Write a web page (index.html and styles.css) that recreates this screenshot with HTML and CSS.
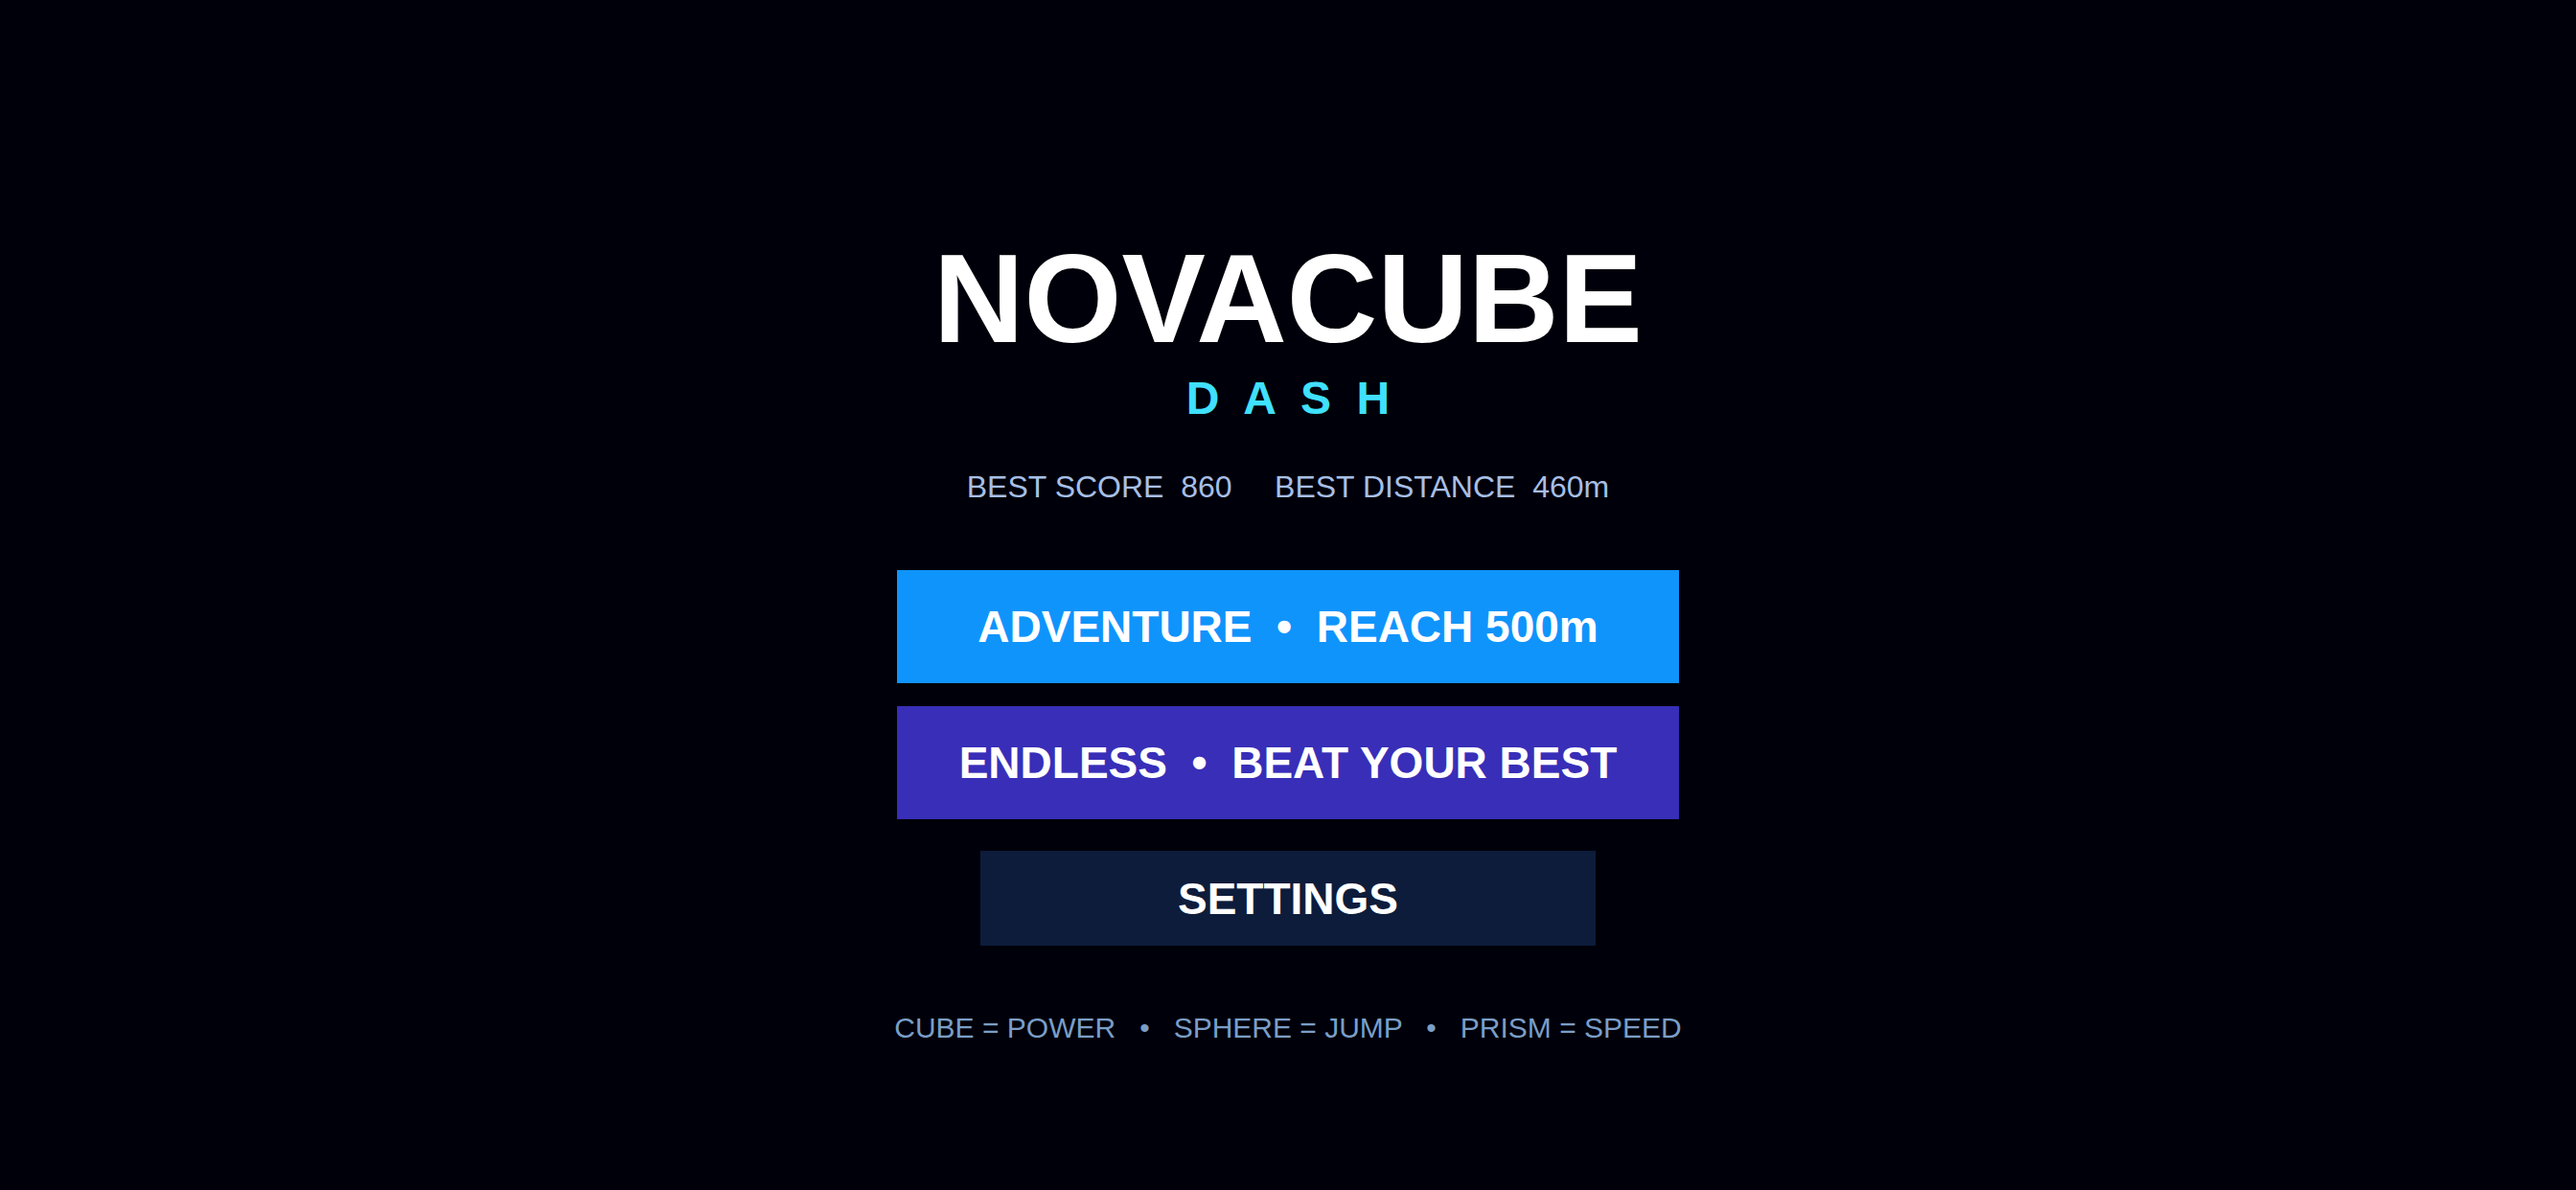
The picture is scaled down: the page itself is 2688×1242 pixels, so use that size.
FILE: index.html
```html
<!DOCTYPE html>
<html lang="en">
<head>
    <meta charset="UTF-8">
    <meta name="viewport" content="width=device-width, initial-scale=1.0">
    <title>Novacube Dash</title>
    <link rel="stylesheet" href="styles.css">
</head>
<body>
    <main class="menu">
        <h1 class="title">NOVACUBE</h1>
        <p class="subtitle">D  A  S  H</p>
        <p class="stats">BEST SCORE  860     BEST DISTANCE  460m</p>

        <div class="buttons">
            <button type="button" class="menu-btn adventure">ADVENTURE  •  REACH 500m</button>
            <button type="button" class="menu-btn endless">ENDLESS  •  BEAT YOUR BEST</button>
            <button type="button" class="menu-btn settings">SETTINGS</button>
        </div>

        <p class="hint">CUBE = POWER   •   SPHERE = JUMP   •   PRISM = SPEED</p>
    </main>
</body>
</html>
```
FILE: styles.css
```css
body {
    margin: 0;
    background: #00000a;
    color: #fff;
    font-family: "Liberation Sans", Arial, sans-serif;
}
.menu {
    box-sizing: border-box;
    min-height: 100vh;
    display: flex;
    flex-direction: column;
    align-items: center;
    padding: 248px 24px 24px;
}
.title, .subtitle, .stats, .hint {
    margin: 0;
    text-align: center;
    white-space: pre-wrap;
}
.title {
    font-size: 131px;
    line-height: 128px;
}
.subtitle {
    margin-top: 16px;
    color: #40e0ff;
    font-size: 48px;
    font-weight: bold;
    line-height: 48px;
}
.stats {
    margin-top: 50px;
    color: #a6bfe6;
    font-size: 32px;
    line-height: 36px;
}
.buttons {
    width: 100%;
    display: flex;
    flex-direction: column;
    align-items: center;
    margin-top: 69px;
}
.menu-btn {
    width: 100%;
    max-width: 816px;
    height: 118px;
    padding: 0;
    border: none;
    color: #fff;
    font-family: inherit;
    font-size: 46px;
    font-weight: bold;
    white-space: pre-wrap;
    cursor: pointer;
}
.adventure { background: #0f94fc; }
.endless {
    margin-top: 24px;
    background: #382eb8;
}
.settings {
    max-width: 642px;
    height: 99px;
    margin-top: 33px;
    background: #0d1c3b;
}
.hint {
    margin-top: 68px;
    color: #7a9ec7;
    font-size: 30px;
    line-height: 36px;
}
```
